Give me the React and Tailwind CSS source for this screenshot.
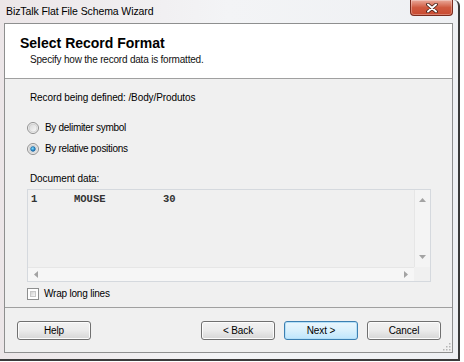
import React from "react";

const Radio = ({ checked }) => (
  <svg width="12" height="12" viewBox="0 0 12 12" className="shrink-0">
    <defs>
      <linearGradient id={checked ? "rg1" : "rg0"} x1="0" y1="0" x2="1" y2="1">
        <stop offset="0" stopColor="#d6d6d6" />
        <stop offset="1" stopColor="#fbfbfb" />
      </linearGradient>
      <radialGradient id="dot" cx="0.4" cy="0.35" r="0.7">
        <stop offset="0" stopColor="#8ae0fb" />
        <stop offset="0.6" stopColor="#2a8fd0" />
        <stop offset="1" stopColor="#125da0" />
      </radialGradient>
    </defs>
    <circle cx="6" cy="6" r="5.5" fill="#f4f4f4" stroke="#8f8f8f" />
    <circle cx="6" cy="6" r="4" fill={`url(#${checked ? "rg1" : "rg0"})`} stroke="#c4c4c4" strokeWidth="0.6" />
    {checked && <circle cx="6" cy="6" r="2.4" fill="url(#dot)" stroke="#1b5d91" strokeWidth="0.6" />}
  </svg>
);

const Checkbox = () => (
  <div className="w-[12px] h-[12px] border border-[#8e8f8f] bg-white p-[2px] shrink-0">
    <div className="w-full h-full bg-gradient-to-br from-[#d3d3d3] to-[#f7f7f7] border border-[#c8c8c8]" />
  </div>
);

const Arrow = ({ dir }) => {
  const pts = {
    up: "0,4 3.5,0 7,4",
    down: "0,0 3.5,4 7,0",
    left: "4,0 0,3.5 4,7",
    right: "0,0 4,3.5 0,7",
  }[dir];
  const vertical = dir === "up" || dir === "down";
  return (
    <svg width={vertical ? 7 : 4} height={vertical ? 4 : 7} viewBox={vertical ? "0 0 7 4" : "0 0 4 7"}>
      <polygon points={pts} fill="#a3a3a3" />
    </svg>
  );
};

const WinButton = ({ children, focused }) => (
  <button
    className={`w-[74px] h-[19px] rounded-[3px] border text-[10px] tracking-[-0.1px] text-black leading-none ${
      focused
        ? "border-[#3c7fb1] bg-gradient-to-b from-[#eaf6fd] via-[#d9f0fc] to-[#bee6fd] shadow-[inset_0_0_0_1px_#b5e0f8]"
        : "border-[#707070] bg-gradient-to-b from-[#f2f2f2] via-[#ebebeb] to-[#d6d6d6] shadow-[inset_0_0_0_1px_#fcfcfc]"
    }`}
  >
    {children}
  </button>
);

export default function App() {
  return (
    <div className="w-[464px] h-[362px] bg-white overflow-hidden font-['Liberation_Sans',Arial,sans-serif] text-black">
      <div className="w-[460px] h-[361px] bg-gradient-to-r from-[#ece6e8] via-[#f3f4f6] to-[#eef0f3] border-r-2 border-b-2 border-[#3a3a3a] rounded-tr-[6px] flex flex-col">
        <div className="h-[23px] flex items-start justify-between pl-[6px] pr-[5px]">
          <span className="text-[10.5px] tracking-[-0.1px] leading-[22px]">BizTalk Flat File Schema Wizard</span>
          <div className="w-[43px] h-[16px] rounded-b-[4px] border border-t-0 border-[#7a2a1c] bg-gradient-to-b from-[#e9a99a] via-[#cf5a40] to-[#c94a30] flex items-center justify-center shadow-[inset_0_0_0_1px_rgba(255,255,255,0.3)]">
            <svg width="12" height="10" viewBox="0 0 12 10">
              <path d="M2 1.5 L10 8.5 M10 1.5 L2 8.5" stroke="#3b1a12" strokeWidth="3.6" strokeLinecap="round" />
              <path d="M2 1.5 L10 8.5 M10 1.5 L2 8.5" stroke="#ffffff" strokeWidth="2" strokeLinecap="round" />
            </svg>
          </div>
        </div>
        <div className="ml-[4px] w-[449px] h-[330px] border border-[#8e8f8f] flex flex-col">
          <div className="h-[55px] bg-white border-b border-[#a0a0a0] pl-[15px] pt-[11px]">
            <div className="text-[14px] font-bold leading-[16px]">Select Record Format</div>
            <div className="text-[10px] tracking-[-0.2px] leading-[14px] pl-[10px] mt-[2px] text-[#111]">Specify how the record data is formatted.</div>
          </div>
          <div className="flex-1 bg-[#f0f0f0] flex flex-col relative">
            <div className="px-[22px] pt-[11px] flex flex-col">
              <div className="text-[10px] tracking-[-0.1px] leading-[15px] ml-[3px]">Record being defined: /Body/Produtos</div>
              <div className="mt-[12px] h-[21px] flex items-center gap-[6px]">
                <Radio />
                <span className="text-[10px] tracking-[-0.3px]">By delimiter symbol</span>
              </div>
              <div className="h-[21px] flex items-center gap-[6px]">
                <Radio checked />
                <span className="text-[10px] tracking-[-0.3px]">By relative positions</span>
              </div>
              <div className="mt-[13px] text-[10px] tracking-[-0.1px] leading-[14px] ml-[3px]">Document data:</div>
              <div className="mt-[3px] w-[404px] h-[93px] border border-[#d5d9de] bg-[#f0f0f0] flex flex-col">
                <div className="flex-1 flex">
                  <div className="flex-1 pl-[3px] pt-[3px] font-['Liberation_Mono','Courier_New',monospace] font-bold text-[10.5px] leading-[13px] text-[#333] flex">
                    <span className="w-[43px]">1</span>
                    <span className="w-[89px]">MOUSE</span>
                    <span>30</span>
                  </div>
                  <div className="w-[16px] border-l border-[#e6e6e6] bg-[#f4f4f4] flex flex-col items-center justify-between py-[8px]">
                    <Arrow dir="up" />
                    <Arrow dir="down" />
                  </div>
                </div>
                <div className="h-[14px] flex">
                  <div className="flex-1 bg-[#f6f6f6] border-t border-[#e6e6e6] flex items-center justify-between px-[6px]">
                    <Arrow dir="left" />
                    <Arrow dir="right" />
                  </div>
                  <div className="w-[16px] bg-[#f0f0f0]" />
                </div>
              </div>
              <div className="mt-[4px] h-[15px] flex items-center gap-[5px]">
                <Checkbox />
                <span className="text-[10px] tracking-[-0.2px]">Wrap long lines</span>
              </div>
            </div>
            <div className="mt-[6px] border-t border-[#a0a0a0]" />
            <div className="mt-[13px] pl-[12px] pr-[11px] flex items-center">
              <WinButton>Help</WinButton>
              <div className="flex-1" />
              <div className="flex gap-[9px]">
                <WinButton>&lt; Back</WinButton>
                <WinButton focused>Next &gt;</WinButton>
                <WinButton>Cancel</WinButton>
              </div>
            </div>
            <svg width="10" height="10" viewBox="0 0 10 10" className="absolute right-[1px] bottom-[1px]">
              {[[8, 2], [8, 5], [5, 5], [8, 8], [5, 8], [2, 8]].map(([x, y]) => (
                <rect key={`${x}-${y}`} x={x} y={y} width="1.5" height="1.5" fill="#b5b5b5" />
              ))}
            </svg>
          </div>
        </div>
      </div>
    </div>
  );
}
